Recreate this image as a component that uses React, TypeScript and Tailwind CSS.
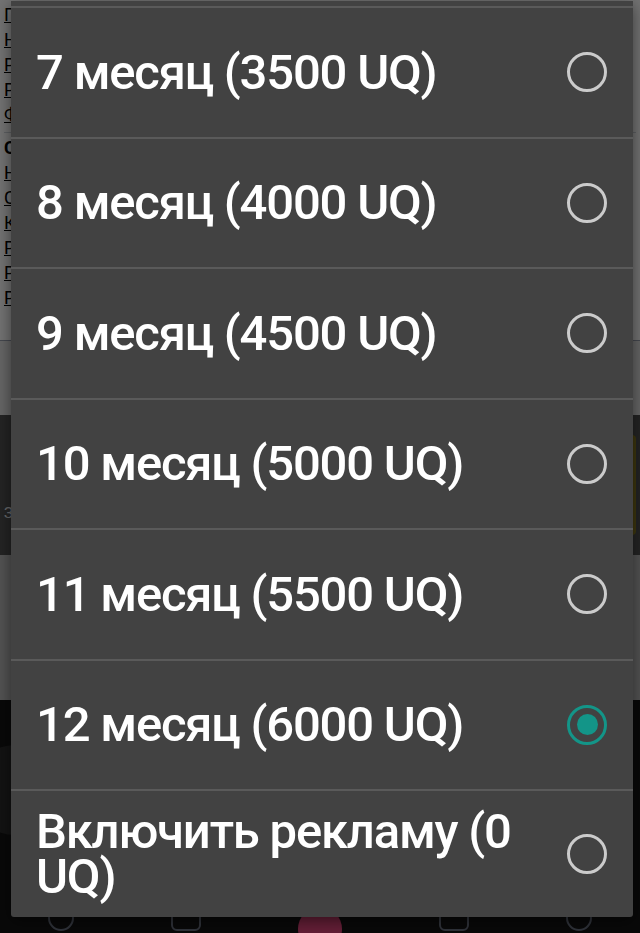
import React from 'react';

const options = [
  { label: '7 месяц (3500 UQ)', checked: false },
  { label: '8 месяц (4000 UQ)', checked: false },
  { label: '9 месяц (4500 UQ)', checked: false },
  { label: '10 месяц (5000 UQ)', checked: false },
  { label: '11 месяц (5500 UQ)', checked: false },
  { label: '12 месяц (6000 UQ)', checked: true },
  { label: 'Включить рекламу (0 UQ)', checked: false }
];

const links = ['Последние', 'Настройки', 'Развлечения', 'Развлечения', 'Форум'];
const links2 = ['Настройки', 'Стикеры', 'Книги', 'Развлечения', 'Развлечения', 'Рейтинг'];

function Radio({checked}: {checked: boolean}) {
  if (checked) {
    return (
      <span className="flex h-[40px] w-[40px] shrink-0 items-center justify-center rounded-full border-[3px] border-[#139588]">
        <span className="h-[21px] w-[21px] rounded-full bg-[#139588]" />
      </span>
    );
  }
  return <span className="h-[40px] w-[40px] shrink-0 rounded-full border-[3px] border-[#cbcbcb]" />;
}

function Page() {
  return (
    <div className="flex h-[933px] w-[640px] flex-col bg-white font-['Roboto',sans-serif] text-black">
      <div className="flex h-[340px] flex-col px-1 pt-[2px] text-[18px] leading-[25px]">
        {links.map((l, i) => (
          <a key={i} className="underline">{l}</a>
        ))}
        <div className="mt-[5px] border-t border-gray-300 pt-[2px] font-bold">Статьи</div>
        {links2.map((l, i) => (
          <a key={i} className="underline">{l}</a>
        ))}
      </div>
      <div className="h-[75px] border-t border-gray-400 bg-[#e2e2e2]" />
      <div className="flex h-[140px] items-center justify-between bg-[#505050] px-1">
        <div className="flex flex-col items-center gap-1 text-[15px] text-gray-200">
          <span className="h-[26px] w-[26px] rounded-full border-2 border-[#c0392b]" />
          <span>Чат</span>
          <span>Заказ</span>
        </div>
        <div className="h-[100px] w-[60px] rounded bg-[#8a7a20]" />
      </div>
      <div className="h-[145px] bg-[#b8b8b8]" />
      <div className="relative flex flex-1 items-end justify-around bg-[#141414] pb-[2px]">
        <span className="absolute -left-[30px] top-[45px] h-[90px] w-[90px] rounded-full bg-[#2a2a2a]" />
        <span className="h-[26px] w-[26px] rounded-full border-2 border-gray-500" />
        <span className="h-[26px] w-[30px] rounded-md border-2 border-gray-500" />
        <span className="h-[44px] w-[44px] translate-y-[20px] rounded-full bg-[#e0457b]" />
        <span className="h-[26px] w-[30px] rounded-md border-2 border-gray-500" />
        <span className="h-[26px] w-[26px] rounded-full border-2 border-gray-500" />
      </div>
    </div>
  );
}

export default function App() {
  return (
    <div className="relative h-[933px] w-[640px] overflow-hidden">
      <Page />
      <div className="absolute inset-0 bg-black/55" />
      <div className="absolute bottom-[16px] left-[11px] w-[622px] overflow-hidden rounded-b-[3px] bg-[#424242] font-['Roboto',sans-serif] text-white shadow-[0_4px_16px_rgba(0,0,0,0.5)]">
        <div className="h-[5.5px]" />
        {options.map((o, i) => (
          <div
            key={i}
            className={
              i === options.length - 1
                ? 'flex h-[128px] items-center justify-between border-t-2 border-[#5a5a5a] pl-[25px] pr-[26px]'
                : 'flex h-[130.5px] items-center justify-between border-t-2 border-[#5a5a5a] pl-[25px] pr-[26px]'
            }
          >
            <span className="max-w-[500px] text-[49px] font-medium leading-[45px] tracking-[-1.2px]">{o.label}</span>
            <Radio checked={o.checked} />
          </div>
        ))}
      </div>
    </div>
  );
}
